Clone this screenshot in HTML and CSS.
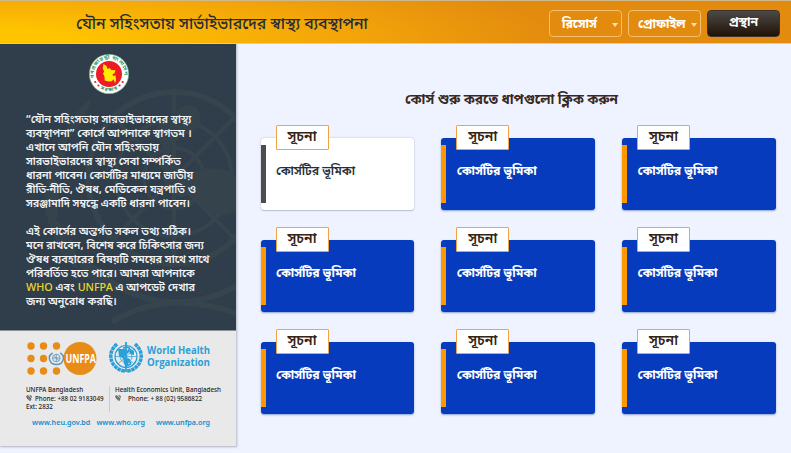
FILE: index.html
```html
<!DOCTYPE html>
<html lang="bn">
<head>
<meta charset="utf-8">
<title>যৌন সহিংসতায় সার্ভাইভারদের স্বাস্থ্য ব্যবস্থাপনা</title>
<link rel="stylesheet" href="styles.css">
</head>
<body>
<header class="topbar">
  <h1 class="title">যৌন সহিংসতায় সার্ভাইভারদের স্বাস্থ্য ব্যবস্থাপনা</h1>
  <nav class="actions">
    <button class="menu"><span class="menu-label">রিসোর্স</span><i class="caret"></i></button>
    <button class="menu"><span class="menu-label">প্রোফাইল</span><i class="caret"></i></button>
    <button class="exit">প্রস্থান</button>
  </nav>
</header>
<div class="layout">
  <aside class="sidebar">
    <section class="intro">
      <svg class="watermark" viewBox="0 0 237 286" fill="none" stroke="#36444e">
        <circle cx="174" cy="134" r="86" stroke-width="6"/>
        <circle cx="174" cy="134" r="58" stroke-width="4"/>
        <circle cx="174" cy="134" r="30" stroke-width="4"/>
        <path d="M174 48v172M88 134h149M113 73l122 122M235 73L113 195" stroke-width="4"/>
        <path d="M180 64q18-8 20 8t-18 20q-20 14-8 26t26 8q26-6 37 8v32q-20 12-33-3t-20-10q-22 0-20-26t-12-40z" fill="#35434d" stroke="none"/>
        <path d="M92 54q-24 18-30 46q20-14 30-46zM67 88q-25 23-21 54q24-22 21-54zM53 128q-16 30-1 58q14-28 1-58zM54 174q-4 33 23 51q2-31-23-51zM77 215q10 30 42 33q-12-27-42-33z" fill="#35434d" stroke="none"/>
        <path d="M100 230q65 50 137 12M112 278q55-34 125-8" stroke-width="6"/>
      </svg>
      <svg class="emblem" viewBox="0 0 40 40">
        <circle cx="20" cy="20" r="19.7" fill="#fff" stroke="#70aa8b" stroke-width=".6"/>
        <circle cx="20" cy="20" r="13" fill="#ed1c24"/>
        <path d="M14.5 10l3 2 1 3 2-1 2 2 4 .3-1 3-2 1 1 2 2-1 .5 5-1 3-1.3-4-2 2-3 .2-4-1-.2-4-1.5-3 1.2-2-1.5-3z" fill="#ffeb00"/>
        <path id="arc-top" d="M5.3 24A15.2 15.2 0 1 1 34.7 24" fill="none"/>
        <path id="arc-bottom" d="M8 32.5A17.5 17.5 0 0 0 32 32.5" fill="none"/>
        <text class="emblem-text"><textPath href="#arc-top" textLength="52">গণপ্রজাতন্ত্রী বাংলাদেশ</textPath></text>
        <text class="emblem-text"><textPath href="#arc-bottom" startOffset="4" textLength="18">সরকার</textPath></text>
        <g fill="#ed1c24"><circle cx="6.3" cy="28" r="1.1"/><circle cx="9.4" cy="31.5" r="1.1"/><circle cx="33.7" cy="28" r="1.1"/><circle cx="30.6" cy="31.5" r="1.1"/></g>
      </svg>
      <p class="copy">“যৌন সহিংসতায় সারভাইভারদের স্বাস্থ্য<br>ব্যবস্থাপনা” কোর্সে আপনাকে স্বাগতম ।<br>এখানে আপনি যৌন সহিংসতায়<br>সারভাইভারদের স্বাস্থ্য সেবা সম্পর্কিত<br>ধারনা পাবেন। কোর্সটির মাধ্যমে জাতীয়<br>রীতি-নীতি, ঔষধ, মেডিকেল যন্ত্রপাতি ও<br>সরঞ্জামাদি সম্বন্ধে একটি ধারনা পাবেন।</p>
      <p class="copy">এই কোর্সের অন্তর্গত সকল তথ্য সঠিক।<br>মনে রাখবেন, বিশেষ করে চিকিৎসার জন্য<br>ঔষধ ব্যবহারের বিষয়টি সময়ের সাথে সাথে<br>পরিবর্তিত হতে পারে। আমরা আপনাকে<br><a>WHO</a> এবং <a>UNFPA</a> এ আপডেট দেখার<br>জন্য অনুরোধ করছি।</p>
    </section>
    <footer class="contact">
      <div class="logos">
        <svg width="71" height="36" viewBox="0 0 71 36">
          <g fill="#e78c17"><circle cx="5" cy="6" r="3.7"/><circle cx="17.5" cy="6" r="3.7"/><circle cx="30.5" cy="6" r="3.7"/><circle cx="5" cy="18.5" r="3.7"/><circle cx="17.5" cy="18.5" r="3.7"/><circle cx="5" cy="31" r="3.7"/><circle cx="17.5" cy="31" r="3.7"/><circle cx="30.5" cy="31" r="3.7"/><circle cx="54" cy="18.5" r="16.5"/></g>
          <g fill="none" stroke="#5b93bd" stroke-width=".8"><circle cx="30.3" cy="18" r="3.8"/><path d="M26.5 18h7.6M30.3 14.2v7.6M27.7 15.4l5.2 5.2"/><path d="M26.5 12.8q-6 4-1 10.3q5 3 9.8 0q5-6.3-1-10.3" stroke-width="1.5"/></g>
          <text class="unfpa" x="39.5" y="23" textLength="30.5" lengthAdjust="spacingAndGlyphs">UNFPA</text>
        </svg>
        <svg class="who" width="104" height="36" viewBox="0 0 104 36">
          <g fill="none" stroke="#2b9fd8">
            <circle cx="17" cy="16.5" r="11" stroke-width="1.2"/><circle cx="17" cy="16.5" r="6" stroke-width=".8"/>
            <path d="M6 16.5h22M9 9l16 15M25 9L9 24" stroke-width=".7"/>
            <path d="M17 2v30" stroke-width="1.8"/>
            <path d="M14 8q8-2 6 2t-6 5 4 5-2 6" stroke-width="1.8"/>
            <path d="M8 4q-9 8-5 18q4 8 13 9M26 4q9 8 5 18q-4 8-13 9" stroke-width="3.5" stroke-dasharray="3.5 .6"/>
          </g>
          <path d="M9 9l7 0 1 5-3 4-4-2zM14 17l7 2-3 8-3-3zM20 8l5 3 0 4-4-1z" fill="#2b9fd8"/>
          <text class="who-name" x="38" y="14" textLength="63" lengthAdjust="spacingAndGlyphs">World Health</text>
          <text class="who-name" x="38" y="26" textLength="63" lengthAdjust="spacingAndGlyphs">Organization</text>
        </svg>
      </div>
      <div class="offices">
        <div class="office first">UNFPA Bangladesh<br><svg class="phone" viewBox="0 0 6 7"><path d="M.5 1v2h1v1.5h1.5v1.5h2v-2H3.5V2.5H2V1zM3.500 1H5.500V3.500" fill="none" stroke="#222" stroke-width=".8"/></svg>Phone: +88 02 9183049<br>Ext: 2832</div>
        <div class="office second">Health Economics Unit, Bangladesh<br><svg class="phone wide" viewBox="0 0 6 7"><path d="M.5 1v2h1v1.5h1.5v1.5h2v-2H3.5V2.5H2V1zM3.500 1H5.500V3.500" fill="none" stroke="#222" stroke-width=".8"/></svg>Phone: + 88 (02) 9586822</div>
      </div>
      <div class="links"><a>www.heu.gov.bd</a><a>www.who.org</a><a>www.unfpa.org</a></div>
    </footer>
  </aside>
  <main class="main">
    <h2 class="heading">কোর্স শুরু করতে ধাপগুলো ক্লিক করুন</h2>
    <div class="grid">
      <article class="card current"><span class="tab">সূচনা</span><p class="name">কোর্সটির ভূমিকা</p></article>
      <article class="card"><span class="tab">সূচনা</span><p class="name">কোর্সটির ভূমিকা</p></article>
      <article class="card"><span class="tab">সূচনা</span><p class="name">কোর্সটির ভূমিকা</p></article>
      <article class="card"><span class="tab">সূচনা</span><p class="name">কোর্সটির ভূমিকা</p></article>
      <article class="card"><span class="tab">সূচনা</span><p class="name">কোর্সটির ভূমিকা</p></article>
      <article class="card"><span class="tab">সূচনা</span><p class="name">কোর্সটির ভূমিকা</p></article>
      <article class="card"><span class="tab">সূচনা</span><p class="name">কোর্সটির ভূমিকা</p></article>
      <article class="card"><span class="tab">সূচনা</span><p class="name">কোর্সটির ভূমিকা</p></article>
      <article class="card"><span class="tab">সূচনা</span><p class="name">কোর্সটির ভূমিকা</p></article>
    </div>
  </main>
</div>
</body>
</html>
```
FILE: styles.css
```css
* { box-sizing: border-box; margin: 0; padding: 0; }
body {
  width: 791px; height: 453px; overflow: hidden;
  background: #eff3ff;
  font-family: "Noto Sans Bengali", "Noto Sans", sans-serif;
  white-space: nowrap;
}
.topbar {
  height: 44px; display: flex; align-items: center; justify-content: space-between;
  padding: 2px 11px 0 76px;
  border-top: 1px solid #cfb88c; border-bottom: 1px solid #eacb98;
  background: radial-gradient(ellipse 560px 75px at 0 38px, #ffc400 12%, #f2a30a 65%, #e38b0f 100%);
}
.title { font-size: 15.85px; font-weight: 500; line-height: 24px; color: #262c35; padding-top: 3px; }
.actions { display: flex; gap: 6px; }
.menu, .exit {
  height: 27px; width: 73px; border-radius: 4px; color: #fff;
  font: 700 12.2px/20px "Noto Sans Bengali", "Noto Sans", sans-serif;
}
.menu {
  display: flex; align-items: center; justify-content: space-between;
  padding: 3px 3px 0 12px; border: 1px solid #f5bf70; background: none;
}
.menu + .menu { padding-left: 9px; }
.caret { border: 3.5px solid transparent; border-top: 4px solid #ffe0ac; border-bottom: 0; }
.exit { border: 1px solid #3c332c; background: linear-gradient(#4c4945, #211208); }
.layout { display: flex; }
.sidebar { width: 237px; height: 402px; border-right: 1px solid #c7cbd7; box-shadow: 0 1px 2px #aeb1bd; }
.intro { position: relative; height: 286px; padding: 10px 0 0 26px; background: #303d4a; overflow: hidden; }
.watermark { position: absolute; left: 0; top: 0; width: 237px; height: 286px; }
.emblem { position: relative; display: block; width: 40px; height: 40px; margin: 0 0 19px 63px; }
.emblem-text { font-size: 5px; font-weight: 700; fill: #269466; }
.copy { position: relative; margin-bottom: 14px; font-size: 10.8px; font-weight: 600; line-height: 14px; color: #f1f3f4; }
.copy a { color: #e7d52d; font-weight: 500; }
.contact { height: 116px; padding-top: 9px; background: #e9e9e9; border-top: 1px solid #8b9297; }
.logos { display: flex; gap: 12px; padding-left: 26px; }
.logos svg { flex: none; overflow: visible; }
.unfpa { font: 700 12.5px "Open Sans", sans-serif; fill: #fff; }
.who-name { font: 700 11px "Open Sans", sans-serif; fill: #2b9fd8; }
.offices { display: flex; margin-top: 10px; padding-left: 26px; color: #222; font: 500 6.25px/8.5px "Noto Sans", sans-serif; }
.first { width: 84px; border-right: 1px solid #ccc; }
.second { padding-left: 5px; }
.phone { width: 6px; height: 6px; margin-right: 3px; }
.wide { margin-right: 7px; }
.links { display: flex; margin: 4px 0 0 32px; color: #168dcc; font: 600 7.2px/12px "Noto Sans", sans-serif; }
.links a:nth-child(2) { margin: 0 11px 0 6px; }
.main { flex: 1; padding: 45px 15.5px 0 23.5px; }
.heading { height: 24px; margin-right: 13px; text-align: center; font-size: 13.6px; font-weight: 700; line-height: 25px; color: #38281f; }
.grid { display: grid; grid-template-columns: repeat(3, 153.5px); justify-content: space-between; row-gap: 30px; margin-top: 25px; }
.card {
  position: relative; height: 72px; padding: 25px 0 0 15.5px;
  border-radius: 3px; background: #073bbd; color: #fff; box-shadow: 0 1px 2px #89a0cf;
}
.card::before { content: ""; position: absolute; left: 0; top: 7px; width: 5px; height: 58px; background: #ff9800; }
.current { background: #fff; color: #252e39; box-shadow: 0 0 2px #aeb7ca, 0 1px 1px #bcc5d7; }
.current::before { background: #4d4d4d; }
.tab {
  position: absolute; left: 15px; top: -13px; width: 53px; height: 25px;
  border: 1px solid #f0a447; border-radius: 1px; background: #fff; color: #352315;
  text-align: center; font-size: 14px; font-weight: 600; line-height: 23px;
}
.name { font-size: 12.2px; font-weight: 700; line-height: 19px; }
.current .name { font-size: 12.2px; font-weight: 600; }
```
